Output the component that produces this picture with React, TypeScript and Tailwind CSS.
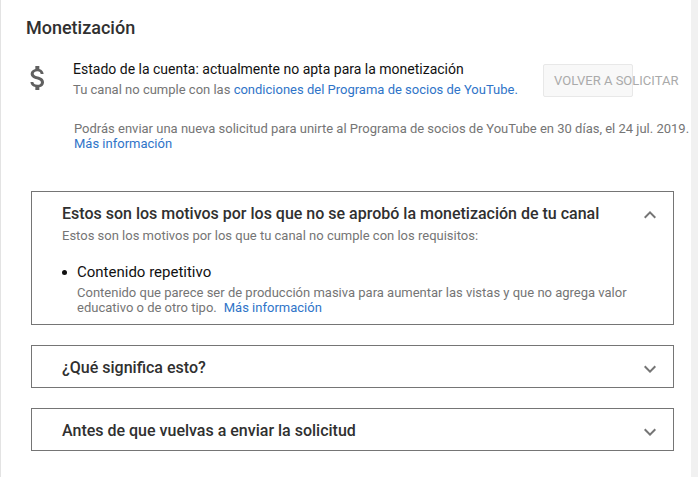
import React from 'react';

const roboto = { fontFamily: 'Roboto, sans-serif' };

const Chevron: React.FC<{ up?: boolean; className?: string }> = ({ up, className = '' }) => (
  <svg viewBox="0 0 24 24" className={`w-6 h-6 shrink-0 fill-[#757575] ${up ? 'rotate-180' : ''} ${className}`}>
    <path d="M7.41 8.59 12 13.17l4.59-4.58L18 10l-6 6-6-6z" />
  </svg>
);

const Collapsed: React.FC<{ title: string }> = ({ title }) => (
  <div className="ml-[30px] w-[643px] h-[43px] border border-[#757575] flex items-center justify-between pl-[30px] pr-[11px]">
    <h3 className="text-[16px] font-medium text-[#303030] pt-[2px]">{title}</h3>
    <Chevron className="mt-[5px]" />
  </div>
);

export default function App() {
  return (
    <div className="w-[698px] h-[477px] overflow-hidden bg-[#f1f1f1]" style={roboto}>
      <div className="w-[691px] h-[477px] bg-white border-l border-[#e3e3e3] relative">
        <h2 className="pl-[25px] pt-[17px] text-[18px] leading-[21px] font-medium text-[#303030]">Monetización</h2>

        <div className="flex mt-[21px] pl-[21px]">
          <svg viewBox="0 0 24 24" className="w-8 h-8 mt-[3px] shrink-0 fill-[#606060]">
            <path d="M11.8 10.9c-2.27-.59-3-1.2-3-2.15 0-1.09 1.01-1.85 2.7-1.85 1.78 0 2.44.85 2.5 2.1h2.21c-.07-1.72-1.12-3.3-3.21-3.81V3h-3v2.16c-1.94.42-3.5 1.68-3.5 3.61 0 2.31 1.91 3.46 4.7 4.13 2.5.6 3 1.48 3 2.41 0 .69-.49 1.79-2.7 1.79-2.06 0-2.87-.92-2.98-2.1h-2.2c.12 2.19 1.76 3.42 3.68 3.83V21h3v-2.15c1.95-.37 3.5-1.5 3.5-3.55 0-2.84-2.43-3.81-4.7-4.4z" />
          </svg>
          <div className="ml-[19px] w-[470px]">
            <div className="text-[14px] leading-[20px] text-[#111111]">Estado de la cuenta: actualmente no apta para la monetización</div>
            <div className="text-[13px] leading-[20px] text-[#757575] mt-[1px] whitespace-nowrap">
              Tu canal no cumple con las <span className="text-[#2f74c8]">condiciones del Programa de socios de YouTube.</span>
            </div>
          </div>
          <div className="w-[90px] h-[33px] mt-[5px] border border-[#e8e8e8] bg-[#f8f8f8] rounded-[2px] flex items-center pl-[10px] text-[13px] text-[#aaaaaa] whitespace-nowrap">
            VOLVER A SOLICITAR
          </div>
        </div>

        <div className="pl-[73px] mt-[21px] text-[13px] leading-[15px] text-[#757575] whitespace-nowrap">
          <div>Podrás enviar una nueva solicitud para unirte al Programa de socios de YouTube en 30 días, el 24 jul. 2019.</div>
          <div className="text-[#2f74c8]">Más información</div>
        </div>

        <div className="ml-[30px] mt-[40px] w-[643px] h-[134px] border border-[#757575] pl-[30px] pr-[11px] pt-[11px]">
          <div className="flex justify-between">
            <h3 className="text-[16px] leading-[22px] font-medium text-[#303030]">Estos son los motivos por los que no se aprobó la monetización de tu canal</h3>
            <Chevron up />
          </div>
          <p className="text-[13px] leading-[16px] text-[#757575] mt-[1px]">Estos son los motivos por los que tu canal no cumple con los requisitos:</p>
          <div className="flex mt-[18px]">
            <span className="w-[5px] h-[5px] rounded-full bg-[#111111] mt-[8px] mr-[10px] shrink-0" />
            <div>
              <div className="text-[15px] leading-[20px] text-[#111111]">Contenido repetitivo</div>
              <div className="text-[13px] leading-[15px] text-[#757575] mt-[3px] whitespace-nowrap">
                <div>Contenido que parece ser de producción masiva para aumentar las vistas y que no agrega valor</div>
                <div>
                  educativo o de otro tipo.
                  <span className="text-[#2f74c8] ml-[7px]">Más información</span>
                </div>
              </div>
            </div>
          </div>
        </div>

        <div className="mt-[20px] flex flex-col gap-[20px]">
          <Collapsed title="¿Qué significa esto?" />
          <Collapsed title="Antes de que vuelvas a enviar la solicitud" />
        </div>
      </div>
    </div>
  );
}
